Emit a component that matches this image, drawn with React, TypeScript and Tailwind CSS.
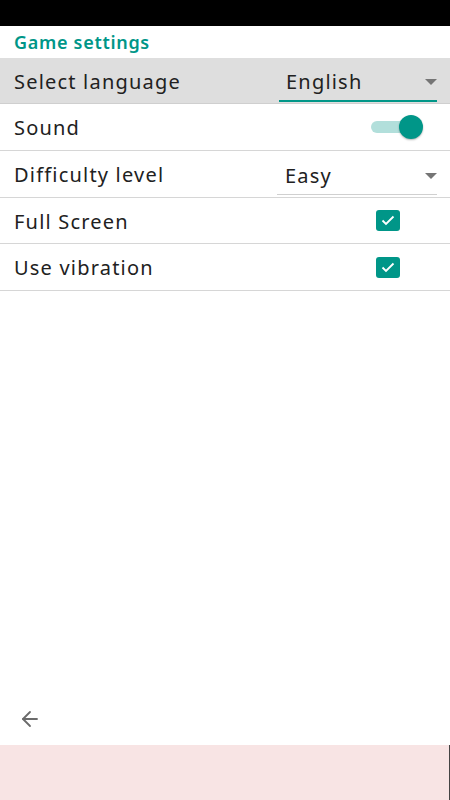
import { ArrowLeft } from 'lucide-react';

const Caret = () => (
    <svg width="12" height="6" viewBox="0 0 12 6" className="shrink-0">
        <path d="M0 0 L12 0 L6 6 Z" fill="#757575" />
    </svg>
);

const Check = () => (
    <div className="w-[24px] h-[21px] rounded-[3px] bg-[#009688] flex items-center justify-center">
        <svg width="14" height="11" viewBox="0 0 14 11">
            <path d="M1.5 5.5 L5 9 L12.5 1.5" fill="none" stroke="#ffffff" strokeWidth="1.8" />
        </svg>
    </div>
);

const App = () => {
    return (
        <div className="w-[450px] h-[800px] flex flex-col bg-white" style={{ fontFamily: '"Noto Sans", sans-serif' }}>
            <div className="h-[26px] bg-black" />
            <div className="h-[32px] px-[14px] flex items-center text-[18px] tracking-[0.7px] font-semibold text-[#009688]">
                Game settings
            </div>
            <div className="h-[46px] bg-[#dedede] border-b border-[#cfcfcf] flex items-center pl-[14px] pr-[13px] text-[20px] tracking-[1.2px] text-[#212121]">
                <span className="flex-1 pt-[2px]">Select language</span>
                <div className="w-[158px] h-[38px] flex items-center justify-between pl-[7px] border-b-2 border-[#009688] mt-[4px]">
                    <span>English</span>
                    <Caret />
                </div>
            </div>
            <div className="h-[47px] border-b border-[#d6d6d6] flex items-center pl-[14px] pr-[27px] text-[20px] tracking-[1.2px] text-[#212121]">
                <span className="flex-1 pt-[2px]">Sound</span>
                <div className="relative w-[52px] h-[24px] flex items-center">
                    <div className="w-[42px] h-[12px] rounded-full bg-[#b2dfdb]" />
                    <div className="absolute right-0 top-0 w-[24px] h-[24px] rounded-full bg-[#009688] shadow-[0_1px_2px_rgba(0,0,0,0.3)]" />
                </div>
            </div>
            <div className="h-[47px] border-b border-[#d6d6d6] flex items-center pl-[14px] pr-[13px] text-[20px] tracking-[1.2px] text-[#212121]">
                <span className="flex-1 pt-[2px]">Difficulty level</span>
                <div className="w-[160px] h-[38px] flex items-center justify-between pl-[8px] border-b border-[#d0d0d0] mt-[4px]">
                    <span>Easy</span>
                    <Caret />
                </div>
            </div>
            <div className="h-[46px] border-b border-[#d6d6d6] flex items-center pl-[14px] pr-[50px] text-[20px] tracking-[1.2px] text-[#212121]">
                <span className="flex-1 pt-[2px]">Full Screen</span>
                <Check />
            </div>
            <div className="h-[47px] border-b border-[#d6d6d6] flex items-center pl-[14px] pr-[50px] text-[20px] tracking-[1.2px] text-[#212121]">
                <span className="flex-1 pt-[2px]">Use vibration</span>
                <Check />
            </div>
            <div className="flex-1" />
            <div className="h-[52px] flex items-center px-[18px]">
                <ArrowLeft size={24} strokeWidth={1.8} color="#6b6b6b" />
            </div>
            <div className="h-[55px] bg-[#f8e4e4] border-r border-[#444]" />
        </div>
    );
};

export default App;
